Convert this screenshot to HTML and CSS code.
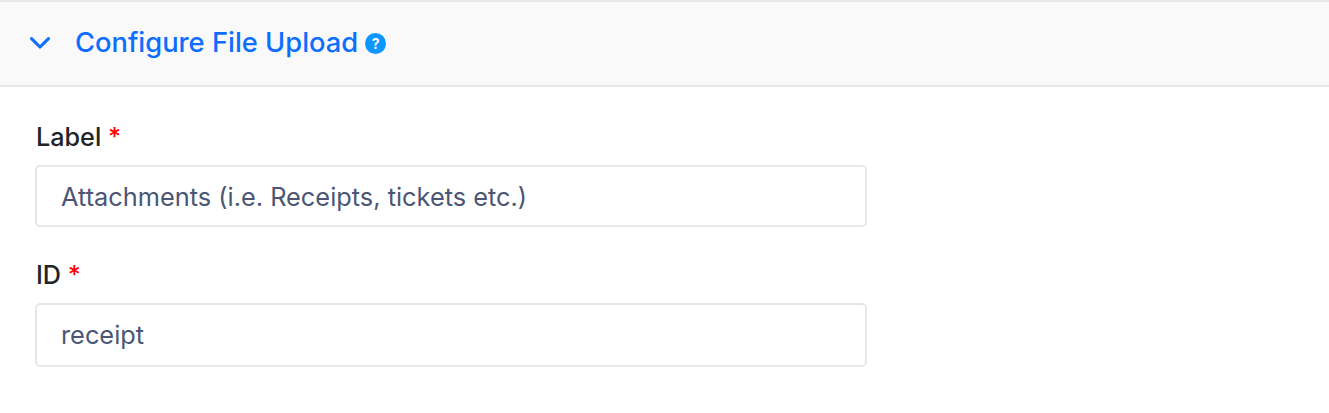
FILE: index.html
```html
<!DOCTYPE html>
<html lang="en">
<head>
  <meta charset="UTF-8">
  <title>Configure File Upload</title>
  <link rel="stylesheet" href="styles.css">
</head>
<body>
  <div class="panel">
    <div class="panel-header">
      <svg class="chevron" viewBox="0 0 22 14" fill="none">
        <path d="M2.5 2.7l8.5 8.3 8.5-8.3" stroke="#0d6efd" stroke-width="3.1" stroke-linecap="round" stroke-linejoin="round"/>
      </svg>
      <span class="title">Configure File Upload</span>
      <span class="help">?</span>
    </div>
    <form class="panel-body">
      <label class="label" for="label">Label <span class="required">*</span></label>
      <input class="field" id="label" type="text" value="Attachments (i.e. Receipts, tickets etc.)">
      <label class="label" for="field-id">ID <span class="required">*</span></label>
      <input class="field field-id" id="field-id" type="text" value="receipt">
    </form>
  </div>
</body>
</html>
```
FILE: styles.css
```css
body {
  margin: 0;
  background-color: #ffffff;
  font-family: Inter, sans-serif;
}

.panel-header {
  display: flex;
  align-items: center;
  height: 87px;
  box-sizing: border-box;
  padding: 0 29px 2px;
  background-color: #f9f9f9;
  border-top: 2px solid #e7e7e7;
  border-bottom: 2px solid #e7e7e7;
}

.chevron {
  width: 22px;
  height: 14px;
  margin-right: 24px;
}

.title {
  color: #0d6efd;
  font-size: 27.3px;
  font-weight: 500;
  line-height: 34px;
}

.help {
  width: 21px;
  height: 21px;
  margin-top: 1px;
  margin-left: 7px;
  border-radius: 50%;
  background-color: #0d96ff;
  color: #ffffff;
  font-size: 14px;
  font-weight: 700;
  line-height: 21px;
  text-align: center;
}

.panel-body {
  display: flex;
  flex-direction: column;
  align-items: flex-start;
  padding: 34px 35px;
}

.label {
  color: #212529;
  font-size: 25.2px;
  font-weight: 500;
  line-height: 32px;
  margin-left: 1px;
  margin-bottom: 12px;
}

.required {
  color: #ff0000;
}

.field {
  width: 832px;
  height: 62px;
  box-sizing: border-box;
  margin-bottom: 32px;
  padding: 0 24px;
  border: 2px solid #e7e7e7;
  border-radius: 5px;
  color: #4b5675;
  font-family: inherit;
  font-size: 25.35px;
}

.field-id {
  height: 64px;
  padding-bottom: 1px;
}
```
